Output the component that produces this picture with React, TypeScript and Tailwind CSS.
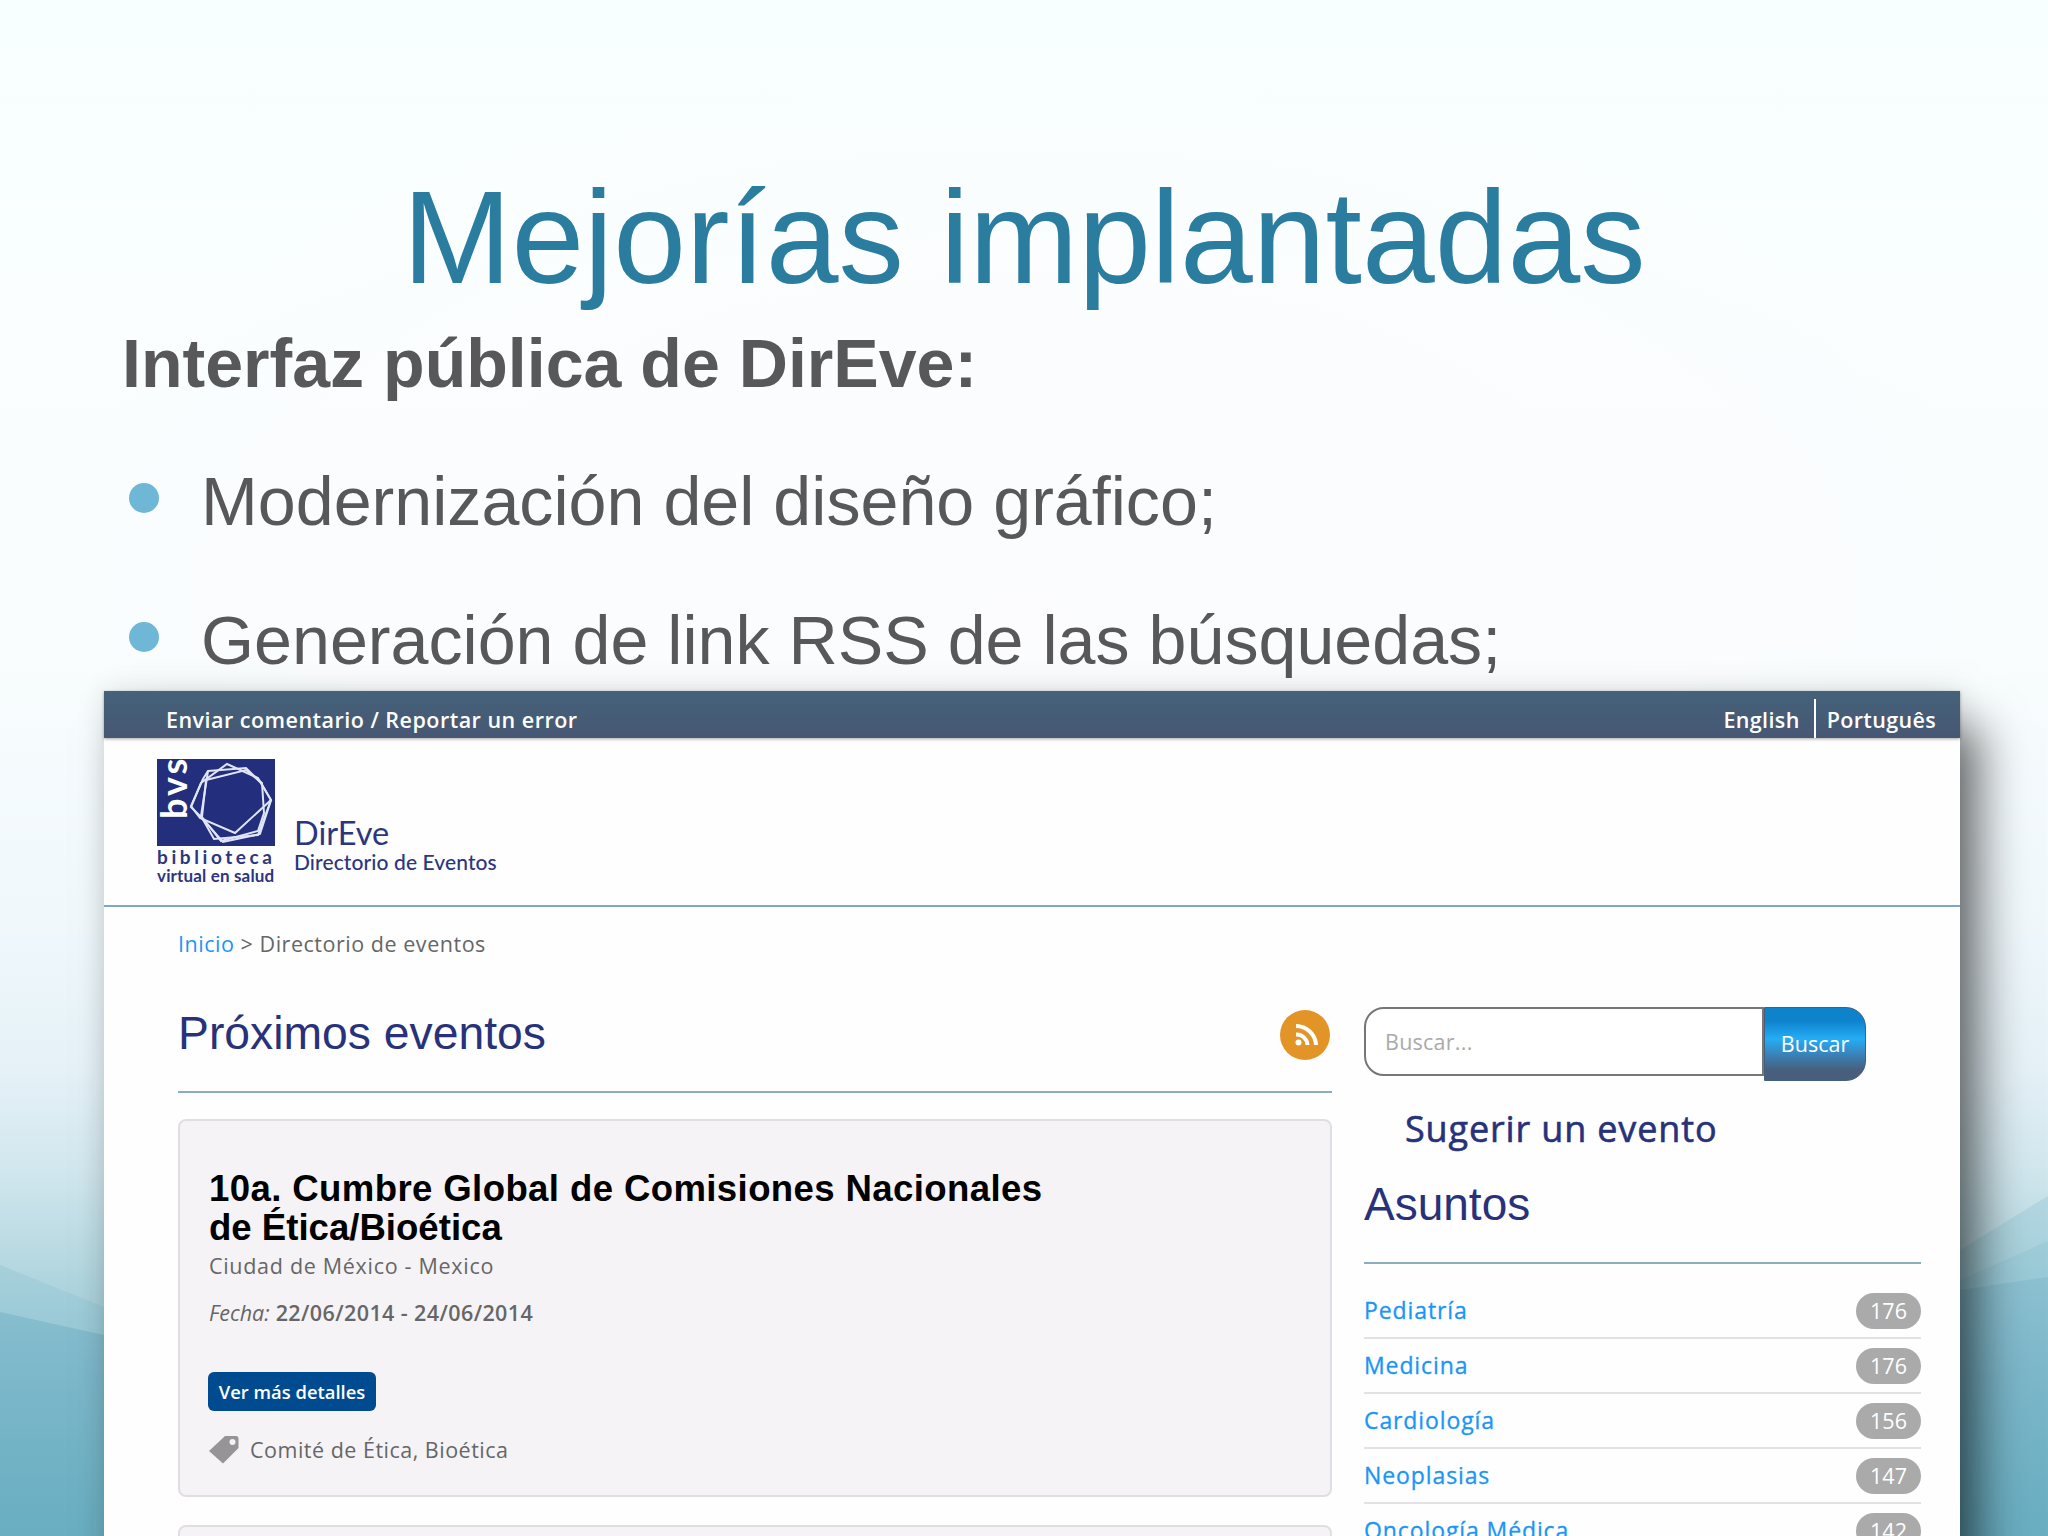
import type React from 'react';

const subjects = [
  { name: 'Pediatría', count: 176 },
  { name: 'Medicina', count: 176 },
  { name: 'Cardiología', count: 156 },
  { name: 'Neoplasias', count: 147 },
  { name: 'Oncología Médica', count: 142 },
];

const Backdrop: React.FC = () => (
  <svg className="absolute inset-0 h-full w-full" viewBox="0 0 2048 1536" preserveAspectRatio="none">
    <defs>
      <linearGradient id="sky" x1="0" y1="0" x2="0" y2="1">
        <stop offset="0" stopColor="#f8ffff" />
        <stop offset="0.2" stopColor="#fafefe" />
        <stop offset="0.42" stopColor="#f9fdfe" />
        <stop offset="0.6" stopColor="#f0f8fc" />
        <stop offset="0.7" stopColor="#e4f1f7" />
        <stop offset="0.76" stopColor="#d2e7ee" />
        <stop offset="0.83" stopColor="#b2d6df" />
        <stop offset="1" stopColor="#6aaec2" />
      </linearGradient>
      <linearGradient id="wave" x1="0" y1="1270" x2="0" y2="1536" gradientUnits="userSpaceOnUse">
        <stop offset="0" stopColor="#8ec2d2" />
        <stop offset="0.4" stopColor="#7cb7ca" />
        <stop offset="1" stopColor="#69aec1" />
      </linearGradient>
      <radialGradient id="glow">
        <stop offset="0" stopColor="#fcfcfe" />
        <stop offset="0.6" stopColor="#fcfcfe" stopOpacity="0.7" />
        <stop offset="1" stopColor="#fcfcfe" stopOpacity="0" />
      </radialGradient>
    </defs>
    <rect width="2048" height="1536" fill="url(#sky)" />
    <ellipse cx="1024" cy="620" rx="1000" ry="560" fill="url(#glow)" />
    <path d="M0 1265 L104 1307 L300 1390 L1700 1330 L1960 1250 L2048 1196 V1536 H0 Z" fill="#84bfd0" fillOpacity="0.3" />
    <path d="M1700 1350 L1960 1280 L2048 1241 V1536 H1700 Z" fill="#84bfd0" fillOpacity="0.3" />
    <path d="M0 1312 L104 1335 L300 1380 L1800 1310 L1960 1290 L2048 1277 V1536 H0 Z" fill="url(#wave)" />
  </svg>
);

const BvsLogo: React.FC = () => (
  <svg className="h-[87px] w-[118px]" viewBox="0 0 118 87">
    <rect width="118" height="87" fill="#232f7c" />
    <g fill="none" stroke="#dfe4f6" strokeWidth="2">
      <path d="M70 5 L101 19 L114 41 L103 75 L66 83 L43 57 L34 48 L44 24 Z" />
      <path d="M51 12 L89 9 L104 24 L114 41 L78 74 L43 59 L34 47 L46 20 Z" />
      <path d="M49 21 L89 11 L105 24 L107 54 L101 72 L64 82 L45 58 Z" />
      <path d="M51 12 L44 57 L57 80 L101 76 L114 41" />
    </g>
    <text
      transform="translate(30 60) rotate(-90)"
      fill="#fff"
      fontFamily="Lato, sans-serif"
      fontWeight="700"
      fontSize="36"
      letterSpacing="3"
    >
      bvs
    </text>
  </svg>
);

const App: React.FC = () => {
  return (
    <main className="relative h-[1536px] w-[2048px] overflow-hidden font-['Liberation_Sans',Arial,sans-serif]">
      <Backdrop />

      <div className="relative flex flex-col">
        {/* Slide text */}
        <div className="h-[691px] pl-[122px] text-[#58585b]">
          <h1 className="ml-[-122px] pt-[162px] text-center text-[130.8px] leading-[152px] text-[#2b7da0]">Mejorías implantadas</h1>
          <p className="mt-[7px] text-[68.1px] leading-[84px] font-bold">Interfaz pública de DirEve:</p>
          <ul className="mt-[54px] flex flex-col gap-[55px] text-[68.2px] leading-[84px]">
            <li className="flex items-center">
              <span className="mr-[42px] mb-[7px] ml-[7px] h-[30px] w-[30px] rounded-full bg-[#6fb7d7]" />
              Modernización del diseño gráfico;
            </li>
            <li className="flex items-center">
              <span className="mr-[42px] mb-[7px] ml-[7px] h-[30px] w-[30px] rounded-full bg-[#6fb7d7]" />
              Generación de link RSS de las búsquedas;
            </li>
          </ul>
        </div>

        {/* Site window */}
        <div className="ml-[104px] h-[900px] w-[1856px] bg-[#fefefe] font-['Open_Sans',sans-serif] text-[21.5px] text-[#666] shadow-[24px_32px_44px_-4px_rgba(0,0,0,0.56),0_0_28px_rgba(0,0,0,0.11)]">
          <div className="flex h-[47px] justify-between bg-[linear-gradient(#446279,#475773)] pr-[24px] pl-[62px] font-semibold text-white shadow-[0_1px_3px_rgba(0,0,0,0.35)]">
            <span className="pt-[14px] leading-[30px] tracking-[0.48px]">Enviar comentario / Reportar un error</span>
            <div className="flex tracking-[0.35px]">
              <span className="pt-[14px] pr-[14px] leading-[30px]">English</span>
              <span className="mt-[8px] border-l-2 border-white pt-[6px] pl-[11px] leading-[30px]">Português</span>
            </div>
          </div>

          <header className="flex h-[169px] border-b-2 border-[#7ea8bd] pt-[21px] pl-[53px] font-[Lato,sans-serif] text-[#2c3680]">
            <div className="flex w-[118px] flex-col">
              <BvsLogo />
              <span className="text-[19px] leading-[22px] font-bold tracking-[3.6px]">biblioteca</span>
              <span className="text-[17px] leading-[15px] font-bold tracking-[0.15px] whitespace-nowrap">virtual en salud</span>
            </div>
            <div className="flex flex-col pt-[56px] pl-[19px]">
              <span className="text-[32.5px] leading-[35px]">DirEve</span>
              <span className="text-[21px] leading-[24px] font-medium tracking-[0.1px]">Directorio de Eventos</span>
            </div>
          </header>

          <p className="pt-[22px] pl-[74px] leading-[30px] tracking-[0.53px]">
            <a className="text-[#1a96f5]">Inicio</a> &gt; Directorio de eventos
          </p>

          <div className="flex pl-[74px]">
            <section className="w-[1154px]">
              <div className="mt-[47px] flex h-[87px] justify-between border-b-2 border-[#8aadc0]">
                <h2 className="font-['Liberation_Sans',sans-serif] text-[46.3px] leading-[54px] text-[#28327a]">Próximos eventos</h2>
                <svg className="mt-[4px] mr-[2px] h-[50px] w-[50px]" viewBox="0 0 50 50">
                  <circle cx="25" cy="25" r="25" fill="#e39426" />
                  <g fill="none" stroke="#fff" strokeWidth="4">
                    <path d="M16 24.5 A11 11 0 0 1 27.5 35" />
                    <path d="M16 16 A20 20 0 0 1 36 35" />
                  </g>
                  <circle cx="18.5" cy="32.5" r="3" fill="#fff" />
                </svg>
              </div>

              <article className="mt-[26px] h-[378px] rounded-lg border-2 border-[#e0dee2] bg-[#f5f3f6] pl-[29px]">
                <h3 className="pt-[48px] font-['Liberation_Sans',sans-serif] text-[36.6px] leading-[39px] font-bold text-black">
                  <span className="tracking-[0.38px]">10a. Cumbre Global de Comisiones Nacionales</span>
                  <br />
                  de Ética/Bioética
                </h3>
                <p className="mt-[4px] leading-[30px] tracking-[0.7px]">Ciudad de México - Mexico</p>
                <p className="mt-[17px] leading-[30px] tracking-[0.4px]">
                  <em className="tracking-normal">Fecha:</em> <b className="font-semibold">22/06/2014 - 24/06/2014</b>
                </p>
                <a className="mt-[44px] ml-[-1px] flex h-[39px] w-[168px] items-center justify-center rounded-md bg-[#004b8f] text-[18.4px] font-semibold whitespace-nowrap text-white">
                  Ver más detalles
                </a>
                <p className="mt-[24px] flex leading-[30px] tracking-[0.5px]">
                  <svg className="h-[30px] w-[30px]" viewBox="0 0 30 30">
                    <path d="M16 1 H27 Q29.5 1 29.5 4 V13 L14 28.5 L0 16 Z" fill="#969496" />
                    <circle cx="23.5" cy="7" r="3" fill="#f5f3f6" />
                  </svg>
                  <span className="pl-[11px]">Comité de Ética, Bioética</span>
                </p>
              </article>
              <div className="mt-[28px] h-[100px] rounded-lg border-2 border-[#e0dee2] bg-[#f5f3f6]" />
            </section>

            <aside className="ml-[32px] w-[557px]">
              <div className="mt-[48px] flex h-[74px] items-start">
                <div className="h-[69px] w-[400px] rounded-l-[20px] border-2 border-[#77757a] bg-white pl-[19px] leading-[66px] tracking-[0.25px] text-[#aaa]">
                  Buscar...
                </div>
                <button className="h-[74px] w-[102px] rounded-r-[20px] border border-[#456079] bg-[linear-gradient(#0d83cc_18%,#25adf5_43%,#3a80b5_66%,#475f7d_86%)] text-white">
                  Buscar
                </button>
              </div>
              <p className="mt-[23px] pl-[41px] text-[36px] leading-[50px] tracking-[0.85px] text-[#28327a] [-webkit-text-stroke:0.6px_#28327a]">
                Sugerir un evento
              </p>
              <h2 className="mt-[23px] h-[87px] border-b-2 border-[#8aadc0] font-['Liberation_Sans',sans-serif] text-[46px] leading-[54px] text-[#28327a]">
                Asuntos
              </h2>
              <ul className="mt-[20px]">
                {subjects.map((s) => (
                  <li key={s.name} className="flex h-[55px] items-center justify-between border-b-2 border-[#e3e0e6] text-[#1a96f5]">
                    <span className="pb-[1px] text-[23px] tracking-[0.9px] [-webkit-text-stroke:0.3px_#1a96f5]">{s.name}</span>
                    <span className="h-[36px] w-[65px] rounded-full bg-[#aaa] text-center leading-[36px] text-white">{s.count}</span>
                  </li>
                ))}
              </ul>
            </aside>
          </div>
        </div>
      </div>
    </main>
  );
};

export default App;
